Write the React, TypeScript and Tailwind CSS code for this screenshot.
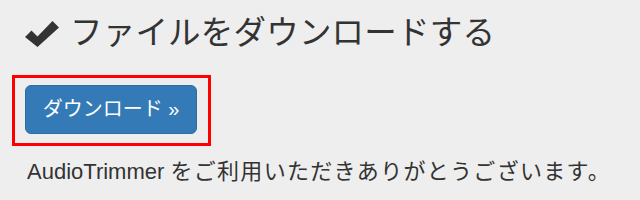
import React from "react"

const CheckIcon = () => (
  <svg width="34" height="28" viewBox="0 0 34 28" className="shrink-0">
    <polygon points="0,18 6.5,11.5 12.5,17.5 27.5,2 34,8.5 12.5,28" fill="#333333" />
  </svg>
)

export default function App() {
  return (
    <div
      className="min-h-[200px] w-full bg-[#eeeeee] px-[25px] text-[#333333]"
      style={{ fontFamily: '"Liberation Sans", "Noto Sans CJK JP", sans-serif' }}
    >
      <h3 className="flex items-center gap-[11px] pt-[13px] text-[32.5px] font-normal leading-[40px] tracking-[0.2px]">
        <CheckIcon />
        <span>ファイルをダウンロードする</span>
      </h3>

      <div className="mt-[22px] ml-[-13px] w-fit border-[3px] border-[#ff0000] pt-[7px] pb-[9px] pl-[10px] pr-[11px]">
        <button className="h-[49px] w-[172px] rounded-[6px] border border-[#2e6da4] bg-[#337ab7] text-[20px] leading-[27px] text-white">
          ダウンロード »
        </button>
      </div>

      <p className="mt-[11px] pl-[2px] text-[22px] leading-[30px]">
        AudioTrimmer <span className="tracking-[1.3px]">をご利用いただきありがとうございます。</span>
      </p>
    </div>
  )
}
